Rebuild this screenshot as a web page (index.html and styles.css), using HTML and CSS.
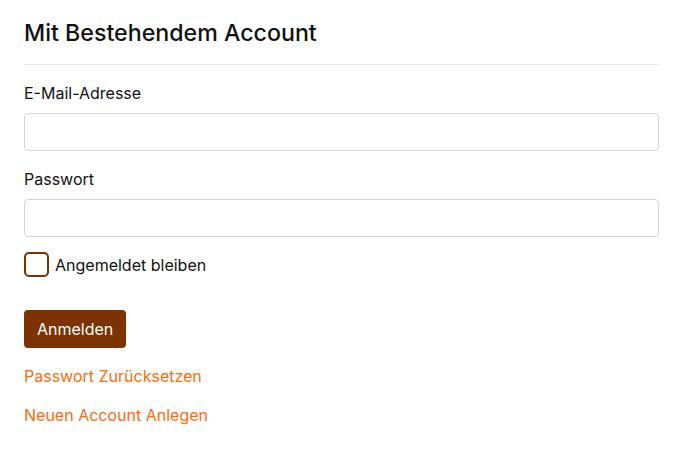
FILE: index.html
```html
<!DOCTYPE html>
<html lang="de">
<head>
   <meta charset="UTF-8">
   <meta name="viewport" content="width=device-width, initial-scale=1.0">
   <title>Anmelden</title>
   <link rel="stylesheet" href="styles.css">
</head>
<body>
   <div class="login">
      <h2 class="login-title">Mit Bestehendem Account</h2>
      <form class="login-form">
         <label class="field">
            <span class="field-label">E-Mail-Adresse</span>
            <input class="field-input" type="email">
         </label>
         <label class="field">
            <span class="field-label">Passwort</span>
            <input class="field-input" type="password">
         </label>
         <label class="remember">
            <span class="remember-box"></span>
            <span>Angemeldet bleiben</span>
         </label>
         <div class="actions">
            <button class="btn-primary" type="button">Anmelden</button>
         </div>
      </form>
      <div class="links">
         <a href="#" class="link">Passwort Zurücksetzen</a>
         <a href="#" class="link">Neuen Account Anlegen</a>
      </div>
   </div>
</body>
</html>
```

FILE: styles.css
```css
* {
   box-sizing: border-box;
}

body {
   margin: 0;
   background: #fff;
   font-family: Inter, "Noto Sans", sans-serif;
   color: #111;
}

.login {
   padding: 18px 24px 0 24px;
}

.login-title {
   margin: 0;
   font-size: 23.2px;
   font-weight: 500;
   line-height: 30px;
   padding-bottom: 16px;
   border-bottom: 1px solid #e5e7eb;
}

.login-form {
   display: flex;
   flex-direction: column;
   padding-top: 17px;
}

.field {
   display: flex;
   flex-direction: column;
   gap: 9px;
   margin-bottom: 17px;
}

.field-label {
   font-size: 16px;
   line-height: 22px;
}

.field-input {
   height: 38px;
   border: 1px solid #d1d5db;
   border-radius: 4px;
   font: inherit;
   padding: 0 12px;
   background: #fff;
}

.remember {
   display: flex;
   align-items: center;
   gap: 6px;
   font-size: 16px;
   margin-top: -2px;
}

.remember-box {
   width: 25px;
   height: 25px;
   border: 2px solid #7c3200;
   border-radius: 5px;
}

.actions {
   margin-top: 33px;
}

.btn-primary {
   background: #7c3300;
   color: #fff;
   border: none;
   border-radius: 4px;
   height: 38px;
   padding: 0 13px;
   font: inherit;
   font-size: 16px;
}

.links {
   display: flex;
   flex-direction: column;
   gap: 17px;
   margin-top: 17px;
}

.link {
   color: #fb6c0c;
   text-decoration: none;
   font-size: 16px;
   line-height: 22px;
}
```
